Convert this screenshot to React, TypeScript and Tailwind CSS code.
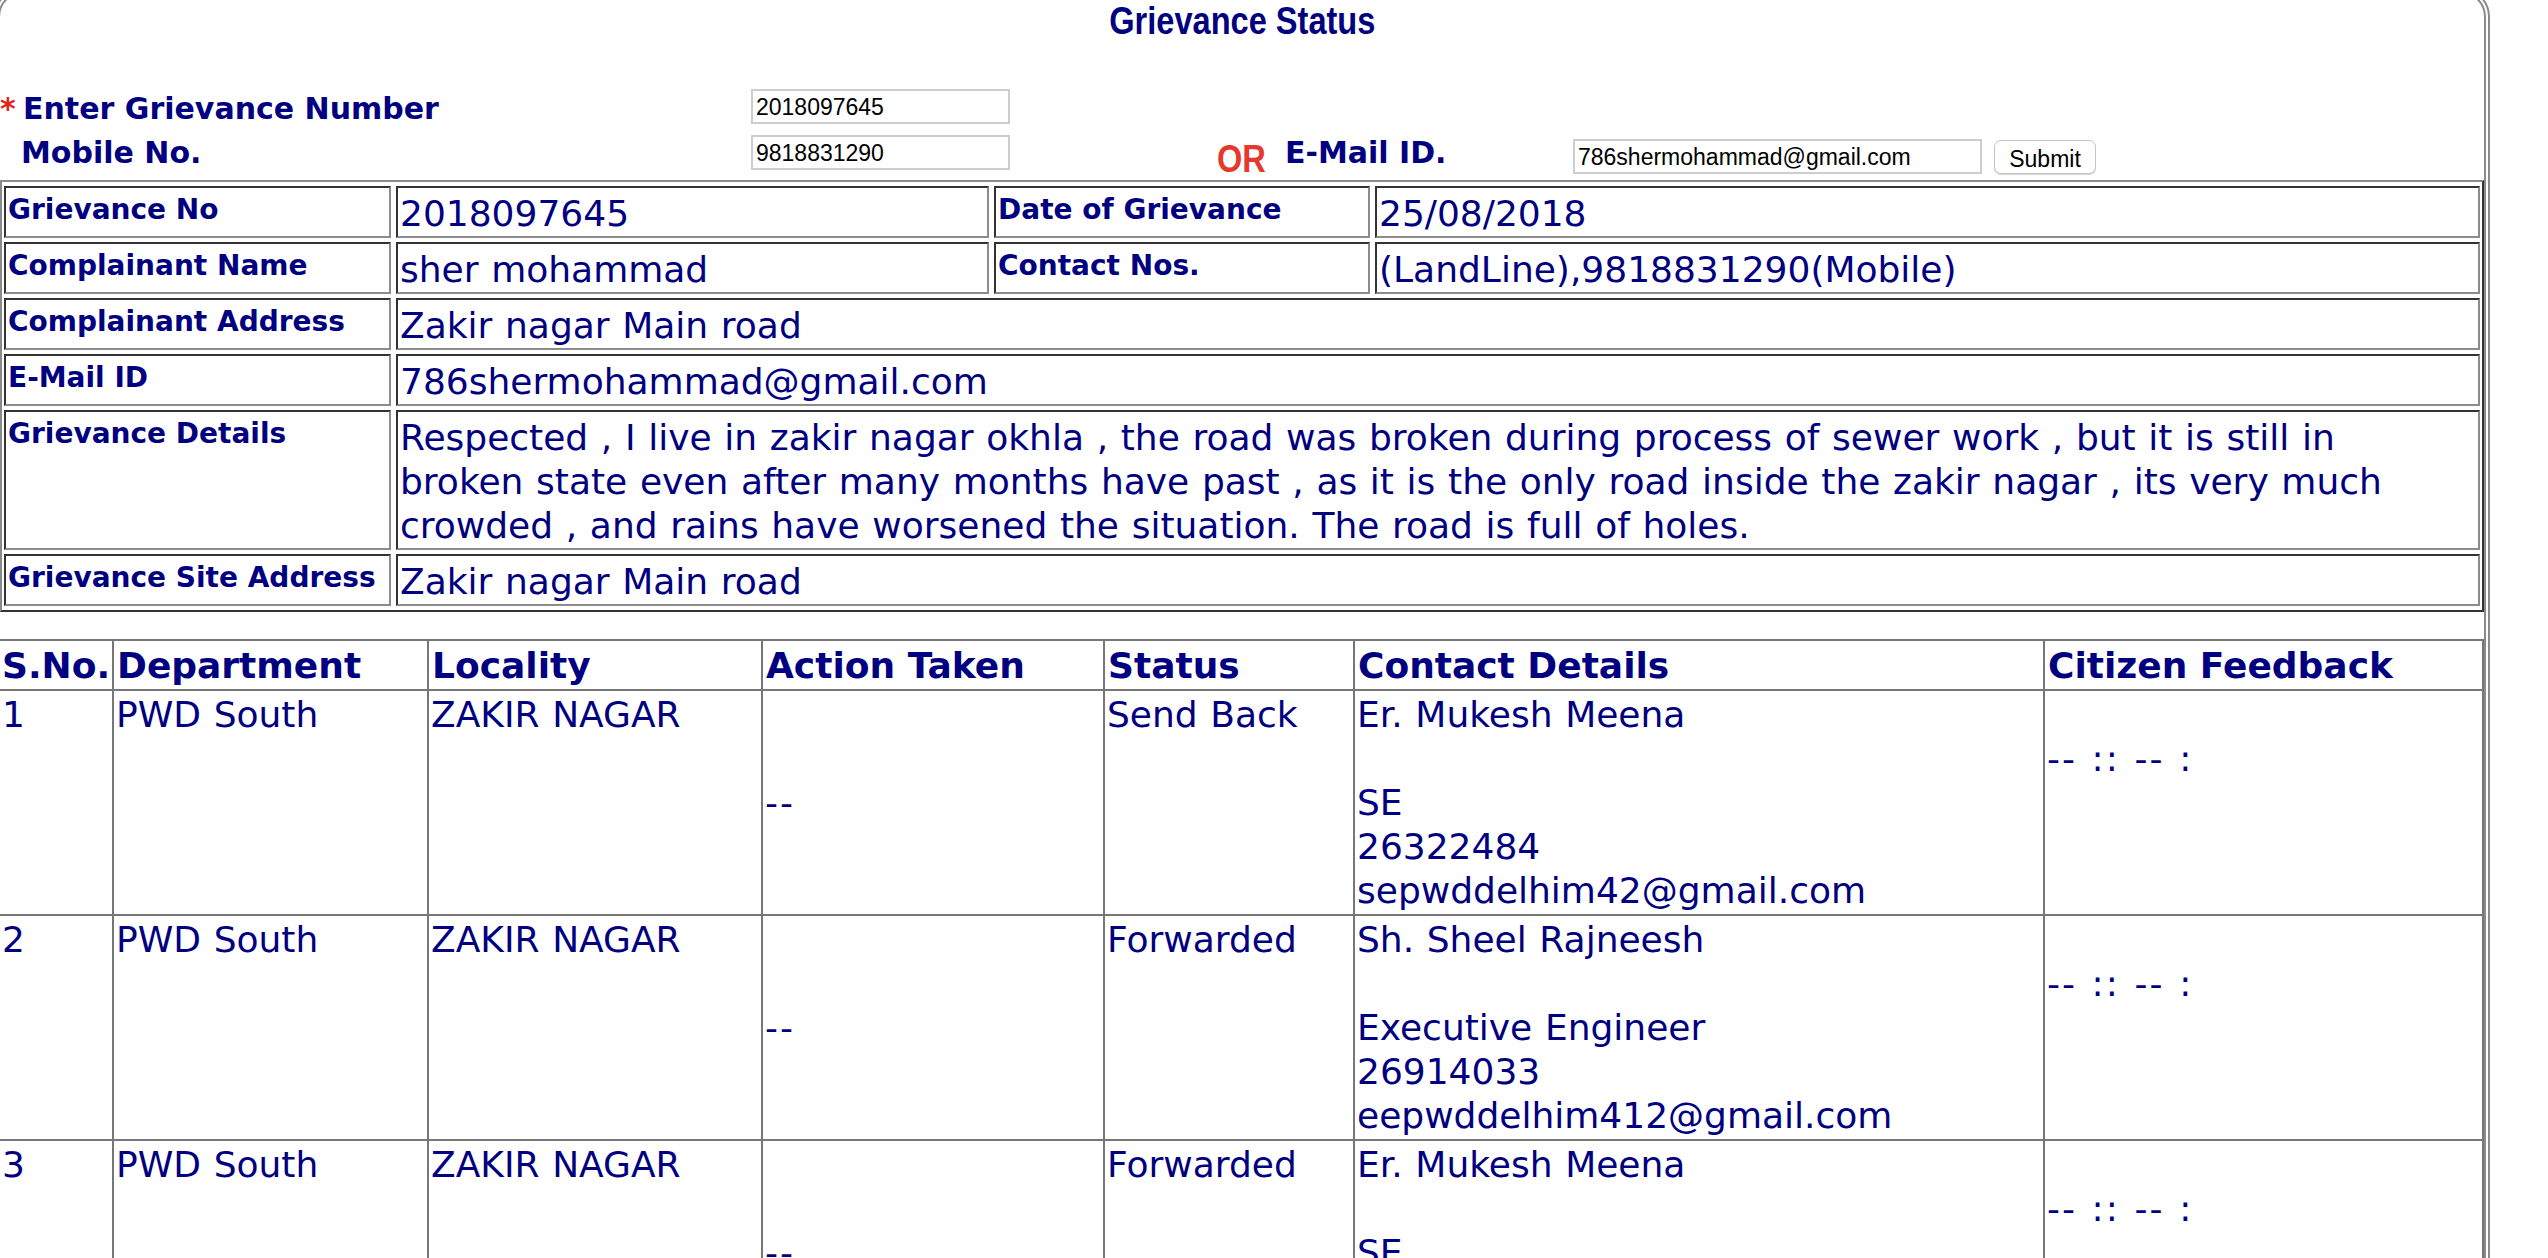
import React from 'react';

type ActionRow = {
  sno: string;
  department: string;
  locality: string;
  status: string;
  contact: string[];
};

const actionRows: ActionRow[] = [
  {
    sno: '1',
    department: 'PWD South',
    locality: 'ZAKIR NAGAR',
    status: 'Send Back',
    contact: ['Er. Mukesh Meena', '', 'SE', '26322484', 'sepwddelhim42@gmail.com'],
  },
  {
    sno: '2',
    department: 'PWD South',
    locality: 'ZAKIR NAGAR',
    status: 'Forwarded',
    contact: ['Sh. Sheel Rajneesh', '', 'Executive Engineer', '26914033', 'eepwddelhim412@gmail.com'],
  },
  {
    sno: '3',
    department: 'PWD South',
    locality: 'ZAKIR NAGAR',
    status: 'Forwarded',
    contact: ['Er. Mukesh Meena', '', 'SE', '26322484', 'sepwddelhim42@gmail.com'],
  },
];

const headings = ['S.No.', 'Department', 'Locality', 'Action Taken', 'Status', 'Contact Details', 'Citizen Feedback'];

// inset look of the old border=1 table cells
const cellBox =
  'border-2 border-solid border-t-[#333333] border-l-[#333333] border-r-[#8c8c8c] border-b-[#8c8c8c] bg-white pl-[2px]';

function InfoLabel({ children }: { children: React.ReactNode }) {
  return <div className={`${cellBox} pt-[5px] text-[28px] font-bold leading-[34px]`}>{children}</div>;
}

function InfoValue({ children, wide }: { children: React.ReactNode; wide?: boolean }) {
  return (
    <div className={`${cellBox} pt-[4px] text-[36px] leading-[44px] [word-spacing:1.2px] ${wide ? 'col-span-3' : ''}`}>
      {children}
    </div>
  );
}

const inputBox =
  "h-[35px] border-2 border-solid border-[#cdcdcd] bg-white px-[3px] font-['Liberation_Sans',Arial,sans-serif] text-[23px] font-normal text-black outline-none";

const narrowBold = "inline-block font-['Liberation_Sans',Arial,sans-serif] font-bold scale-x-[0.835]";

const bodyCell = 'border-b-2 border-l-2 border-solid border-[#777777] pt-[2px] pb-[1px] pl-[2px] [word-spacing:1.2px]';

function App() {
  return (
    <div className="min-h-screen bg-white font-['DejaVu_Sans',Verdana,sans-serif] text-[#000080]">
      <div className="-mt-[13px] -ml-[6px] mr-[58px] rounded-[30px] border-[6px] border-double border-[#8a8a8a]">
        <div className="pt-[5px] text-center text-[39px] leading-[45px]">
          <span className={`${narrowBold} origin-center`}>Grievance Status</span>
        </div>

        {/* search form */}
        <div className="mt-[46px] flex h-[35px] items-start text-[30px] font-bold leading-[36px]">
          <div className="w-[751px] shrink-0 pt-[2px]">
            <span className="inline-block w-[23px] text-[#e02424]">*</span>
            Enter Grievance Number
          </div>
          <input className={`${inputBox} w-[259px]`} defaultValue="2018097645" />
        </div>

        <div className="mt-[11px] flex h-[39px] items-start text-[30px] font-bold leading-[36px]">
          <div className="w-[751px] shrink-0 pl-[21px]">Mobile No.</div>
          <input className={`${inputBox} w-[259px]`} defaultValue="9818831290" />
          <div className="mt-[6px] ml-[207px] w-[68px] shrink-0 text-[39px] leading-[36px] text-[#e6392d]">
            <span className={`${narrowBold} origin-left`}>OR</span>
          </div>
          <div className="w-[288px] shrink-0">E-Mail ID.</div>
          <input className={`${inputBox} mt-[4px] w-[409px]`} defaultValue="786shermohammad@gmail.com" />
          <button className="mt-[5px] ml-[12px] h-[34px] w-[102px] rounded-[7px] border border-solid border-[#c4c4c4] bg-white font-['Liberation_Sans',Arial,sans-serif] text-[23px] font-normal text-black shadow-[0_1px_1px_rgba(0,0,0,0.18)]">
            Submit
          </button>
        </div>

        {/* grievance details */}
        <div className="mt-[6px] grid grid-cols-[387px_593px_376px_1fr] gap-x-[5px] gap-y-[4px] border-2 border-solid border-t-[#8a8a8a] border-l-[#8a8a8a] border-r-[#333333] border-b-[#333333] pt-[4px] pr-[2px] pb-[4px] pl-[2px]">
          <InfoLabel>Grievance No</InfoLabel>
          <InfoValue>2018097645</InfoValue>
          <InfoLabel>Date of Grievance</InfoLabel>
          <InfoValue>25/08/2018</InfoValue>

          <InfoLabel>Complainant Name</InfoLabel>
          <InfoValue>sher mohammad</InfoValue>
          <InfoLabel>Contact Nos.</InfoLabel>
          <InfoValue>(LandLine),9818831290(Mobile)</InfoValue>

          <InfoLabel>Complainant Address</InfoLabel>
          <InfoValue wide>Zakir nagar Main road</InfoValue>

          <InfoLabel>E-Mail ID</InfoLabel>
          <InfoValue wide>786shermohammad@gmail.com</InfoValue>

          <InfoLabel>Grievance Details</InfoLabel>
          <InfoValue wide>
            Respected , I live in zakir nagar okhla , the road was broken during process of sewer work , but it is still in
            <br />
            broken state even after many months have past , as it is the only road inside the zakir nagar , its very much
            <br />
            crowded , and rains have worsened the situation. The road is full of holes.
          </InfoValue>

          <InfoLabel>Grievance Site Address</InfoLabel>
          <InfoValue wide>Zakir nagar Main road</InfoValue>
        </div>

        {/* action history */}
        <div className="mt-[27px] grid grid-cols-[112px_315px_334px_342px_250px_690px_1fr] border-t-2 border-r-2 border-solid border-[#777777] text-[36px] leading-[44px]">
          {headings.map((h, i) => (
            <div
              key={h}
              className={`border-b-2 border-solid border-[#777777] pt-[3px] pb-[1px] font-bold whitespace-nowrap ${
                i === 0 ? 'pl-[2px]' : 'border-l-2 pl-[3px]'
              }`}
            >
              {h}
            </div>
          ))}

          {actionRows.map((row) => (
            <React.Fragment key={row.sno}>
              <div className="border-b-2 border-solid border-[#777777] pt-[2px] pb-[1px] pl-[2px]">{row.sno}</div>
              <div className={bodyCell}>{row.department}</div>
              <div className={bodyCell}>{row.locality}</div>
              <div className={`${bodyCell} flex items-center tracking-[2px]`}>--</div>
              <div className={bodyCell}>{row.status}</div>
              <div className={`${bodyCell} whitespace-nowrap`}>
                {row.contact.map((line, i) => (
                  <div key={i}>{line || '\u00a0'}</div>
                ))}
              </div>
              <div className={`${bodyCell} tracking-[2px]`}>
                <div>{'\u00a0'}</div>
                <div>-- :: -- :</div>
              </div>
            </React.Fragment>
          ))}
        </div>
      </div>
    </div>
  );
}

export default App;
